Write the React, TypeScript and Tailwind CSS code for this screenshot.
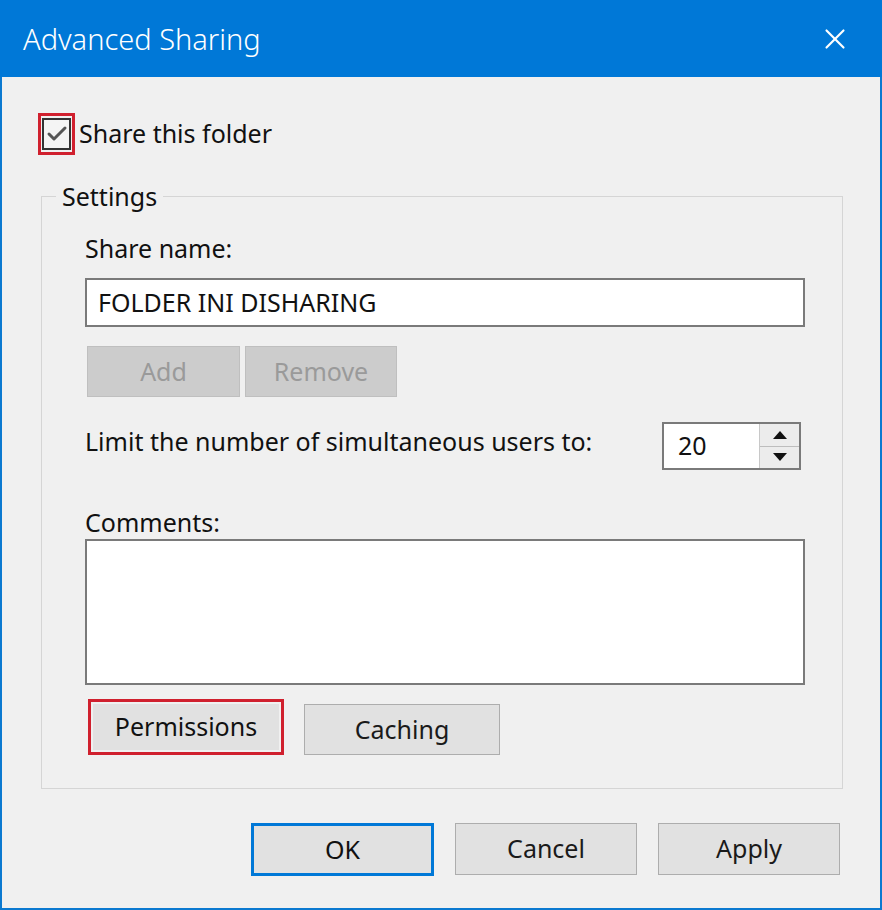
import { Check, X } from "lucide-react";

function WinButton({
  label,
  className = "",
}: {
  label: string;
  className?: string;
}) {
  return (
    <div
      className={`flex items-center justify-center border border-[#adadad] bg-[#e1e1e1] text-[25px] text-[#1a1a1a] ${className}`}
    >
      {label}
    </div>
  );
}

export default function App() {
  return (
    <div
      className="flex h-[910px] w-[882px] flex-col border-x-2 border-b-2 border-[#0b79d0] bg-[#f0f0f0] text-[#111]"
      style={{ fontFamily: '"Noto Sans", "Open Sans", sans-serif' }}
    >
      {/* Title bar */}
      <div className="-mx-[2px] flex h-[77px] items-center justify-between bg-[#0078d7] pl-[23px] pr-[30px] text-white">
        <span className="text-[29px] font-light">Advanced Sharing</span>
        <X className="h-[34px] w-[34px]" strokeWidth={1.5} />
      </div>

      <div className="flex flex-1 flex-col px-[39px] pt-[36px]">
        {/* Share checkbox */}
        <div className="-ml-[3px] flex items-center gap-[4px]">
          <div className="flex h-[42px] w-[37px] items-center justify-center border-[3px] border-[#d0202e]">
            <div className="flex h-[32px] w-[29px] items-center justify-center border-2 border-[#333] bg-[#f4f4f4]">
              <Check className="h-[24px] w-[24px] text-[#555]" strokeWidth={3} />
            </div>
          </div>
          <span className="text-[25px]">Share this folder</span>
        </div>

        {/* Settings group */}
        <div className="relative mt-[41px] h-[593px] w-[802px] border border-[#d5d5d5] px-[43px] pt-[34px]">
          <span className="absolute -top-[18px] left-[14px] bg-[#f0f0f0] px-[6px] text-[25px] leading-[34px]">
            Settings
          </span>

          <div className="text-[25px] leading-[34px]">Share name:</div>
          <div className="mt-[13px] flex h-[49px] w-[720px] items-center border-2 border-[#7a7a7a] bg-white pl-[11px] text-[25px]">
            FOLDER INI DISHARING
          </div>

          <div className="mt-[19px] flex gap-[5px] pl-[2px]">
            <div className="flex h-[51px] w-[153px] items-center justify-center border border-[#bfbfbf] bg-[#cccccc] text-[25px] text-[#9a9a9a]">
              Add
            </div>
            <div className="flex h-[51px] w-[152px] items-center justify-center border border-[#bfbfbf] bg-[#cccccc] text-[25px] text-[#9a9a9a]">
              Remove
            </div>
          </div>

          <div className="-mr-[2px] mt-[25px] flex items-start justify-between">
            <span className="mt-[2px] text-[25px] leading-[34px]">
              Limit the number of simultaneous users to:
            </span>
            <div className="flex h-[48px] w-[139px] border-2 border-[#7a7a7a] bg-white">
              <div className="flex flex-1 items-center pl-[14px] text-[25px]">20</div>
              <div className="flex w-[40px] flex-col border-l border-[#c8c8c8] bg-[#ececec]">
                <div className="flex flex-1 items-center justify-center border-b border-[#bdbdbd]">
                  <svg width="14" height="8" viewBox="0 0 14 8">
                    <path d="M0 8 L7 0 L14 8 Z" fill="#111" />
                  </svg>
                </div>
                <div className="flex flex-1 items-center justify-center">
                  <svg width="14" height="8" viewBox="0 0 14 8">
                    <path d="M0 0 L7 8 L14 0 Z" fill="#111" />
                  </svg>
                </div>
              </div>
            </div>
          </div>

          <div className="mt-[35px] text-[25px] leading-[34px]">Comments:</div>
          <div className="h-[146px] w-[720px] border-2 border-[#7a7a7a] bg-white" />

          <div className="mt-[14px] flex items-end gap-[20px] pl-[3px]">
            <div className="flex h-[56px] w-[196px] border-[3px] border-[#d0202e] p-[2px]">
              <div className="flex flex-1 items-center justify-center bg-[#e1e1e1] text-[25px]">
                Permissions
              </div>
            </div>
            <WinButton label="Caching" className="h-[51px] w-[196px]" />
          </div>
        </div>

        {/* Dialog buttons */}
        <div className="mt-[34px] flex justify-end gap-[21px] pr-[1px]">
          <div className="flex h-[53px] w-[183px] items-center justify-center border-[3px] border-[#0078d7] bg-[#e1e1e1] text-[25px]">
            OK
          </div>
          <WinButton label="Cancel" className="h-[52px] w-[182px]" />
          <WinButton label="Apply" className="h-[52px] w-[182px]" />
        </div>
      </div>
    </div>
  );
}
